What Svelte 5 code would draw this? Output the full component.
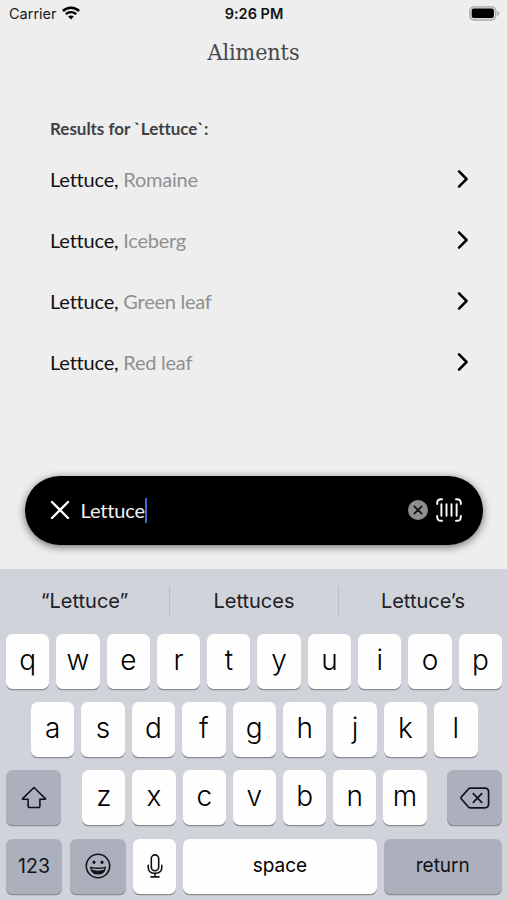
<script>
  const results = ['Romaine', 'Iceberg', 'Green leaf', 'Red leaf'];
  const suggestions = ['“Lettuce”', 'Lettuces', 'Lettuce’s'];
  const top = [...'qwertyuiop'];
  const home = [...'asdfghjkl'];
  const bottom = [...'zxcvbnm'];
</script>

<div class="phone">
  <header class="status">
    <div class="carrier">
      <span>Carrier</span>
      <svg width="18" height="14" viewBox="0 0 18 14" fill="none" stroke="#000">
        <path d="M.9 5C5.4.7 12.6.7 17.1 5" stroke-width="2.5" />
        <path d="M3.8 8.2c2.9-2.8 7.5-2.8 10.4 0" stroke-width="2.3" />
        <path d="M9 13.6 6.1 10.6c1.6-1.5 4.2-1.5 5.8 0z" fill="#000" stroke="none" />
      </svg>
    </div>
    <span class="time">9:26 PM</span>
    <svg class="battery" width="31" height="15" viewBox="0 0 31 15">
      <rect x=".8" y=".8" width="26" height="13.2" rx="4" fill="#dcdcdc" stroke="#aaa" stroke-width="1.3" />
      <rect x="2.7" y="2.6" width="22.2" height="9.5" rx="2" fill="#000" />
      <path d="M28.3 5v5q2-.8 2-2.5t-2-2.5z" fill="#aaa" />
    </svg>
  </header>

  <h1>Aliments</h1>

  <main>
    <h2>Results for `Lettuce`:</h2>
    {#each results as kind}
      <div class="result">
        <span>Lettuce, <em>{kind}</em></span>
        <svg width="12" height="20" viewBox="0 0 12 20" fill="none" stroke="#000" stroke-width="2.5" stroke-linecap="round" stroke-linejoin="round">
          <path d="m2 2.4 7.6 7.6L2 17.6" />
        </svg>
      </div>
    {/each}
  </main>

  <div class="search">
    <svg width="20" height="20" viewBox="0 0 20 20" stroke="#fff" stroke-width="2.4" stroke-linecap="round">
      <path d="m2 2 16 16M18 2 2 18" />
    </svg>
    <span class="query">Lettuce</span><i class="caret"></i>
    <svg class="clear" width="20" height="20" viewBox="0 0 20 20">
      <circle cx="10" cy="10" r="10" fill="#8e8d91" />
      <path d="m6.3 6.3 7.4 7.4M13.7 6.3l-7.4 7.4" stroke="#101012" stroke-width="1.7" stroke-linecap="round" />
    </svg>
    <svg width="26" height="24" viewBox="0 0 26 24" fill="none" stroke="#fff" stroke-width="1.9" stroke-linecap="round">
      <path d="M1.2 6V5Q1.2 1.2 5 1.2h1M20 1.2h1q3.8 0 3.8 3.8v1M24.8 18v1q0 3.8-3.8 3.8h-1M6 22.8H5Q1.2 22.8 1.2 19v-1" />
      <path d="M5.4 6.2v11.6M10.5 6.2v11.6M15.5 6.2v11.6M20.6 6.2v11.6" />
    </svg>
  </div>

  <section class="keyboard">
    <div class="suggestions">
      {#each suggestions as word}<span>{word}</span>{/each}
    </div>
    <div class="row">
      {#each top as letter}<div class="key">{letter}</div>{/each}
    </div>
    <div class="row home">
      {#each home as letter}<div class="key">{letter}</div>{/each}
    </div>
    <div class="row bottom">
      <div class="key dark shift">
        <svg width="26" height="24" viewBox="0 0 26 24" fill="none" stroke="#10131a" stroke-width="1.6" stroke-linejoin="round">
          <path d="M13 1.5 1.6 12.6q-.5.7.5.7h5v6.4q0 1.8 1.8 1.8h8.2q1.8 0 1.8-1.8v-6.4h5q1 0 .5-.7z" />
        </svg>
      </div>
      {#each bottom as letter}<div class="key">{letter}</div>{/each}
      <div class="key dark delete">
        <svg width="30" height="22" viewBox="0 0 30 22" fill="none" stroke="#10131a" stroke-width="1.7" stroke-linecap="round" stroke-linejoin="round">
          <path d="M10.6 1.2h14.2q3.8 0 3.8 3.8v12q0 3.8-3.8 3.8H10.6q-1.3 0-2.3-1L1.6 12.3q-1.2-1.3 0-2.6l6.7-7.5q1-1 2.3-1z" />
          <path d="m13.3 6.7 8.4 8.6M21.7 6.7l-8.4 8.6" />
        </svg>
      </div>
    </div>
    <div class="row controls">
      <div class="key dark numbers">123</div>
      <div class="key dark emoji">
        <svg width="26" height="26" viewBox="0 0 26 26" fill="none" stroke="#10131a">
          <circle cx="13" cy="13" r="11.7" stroke-width="1.6" />
          <ellipse cx="9" cy="9.2" rx="1.5" ry="1.8" fill="#10131a" stroke="none" />
          <ellipse cx="17" cy="9.2" rx="1.5" ry="1.8" fill="#10131a" stroke="none" />
          <path d="M5.7 14.3q7.3 1.9 14.6 0-.8 6.5-7.3 6.5t-7.3-6.5z" stroke-width="1.3" />
          <path d="M6.5 16.6q6.5 2.2 13 0-1.3 4.2-6.5 4.2t-6.5-4.2z" fill="#10131a" stroke="none" />
        </svg>
      </div>
      <div class="key mic">
        <svg width="16" height="24" viewBox="0 0 16 24" fill="none" stroke="#111" stroke-width="1.6" stroke-linecap="round">
          <rect x="4.3" y=".9" width="7.4" height="15.8" rx="3.7" />
          <path d="M1.2 11.4v1.9q0 6 6.8 6t6.8-6v-1.9M8 19.3v3.6M4 22.9h8" />
        </svg>
      </div>
      <div class="key space">space</div>
      <div class="key dark return">return</div>
    </div>
  </section>
</div>

<style>
  :global(body) { margin: 0; background: #eee; }
  .phone {
    box-sizing: border-box;
    width: 507px;
    height: 900px;
    display: flex;
    flex-direction: column;
    overflow: hidden;
    background: #eee;
    color: #000;
    font-family: Inter, "Liberation Sans", sans-serif;
    font-variant-ligatures: none;
  }
  .status {
    height: 27px;
    display: grid;
    grid-template-columns: 1fr auto 1fr;
    align-items: center;
    padding: 0 8px 0 9px;
    font-size: 14.5px;
    color: #1a1a1a;
  }
  .carrier { display: flex; align-items: center; gap: 5.5px; }
  .carrier svg { margin-top: -2px; }
  .time { font-weight: 600; color: #111; }
  .battery { justify-self: end; margin: -1px -1px 0 0; }
  h1 {
    margin: 9px 0 0;
    height: 32px;
    text-align: center;
    font: 400 23px/32px "DejaVu Serif Condensed", "DejaVu Serif", serif;
    letter-spacing: -.05px;
    color: #45484c;
  }
  main { padding: 50px 38.5px 0 50px; font-family: Lato, sans-serif; }
  h2 { margin: 0; font-size: 17px; line-height: 22px; font-weight: 700; letter-spacing: -.03px; color: #3f4145; }
  .result {
    height: 61px;
    display: flex;
    align-items: center;
    justify-content: space-between;
    font-size: 20px;
    letter-spacing: -.2px;
    color: #111;
  }
  h2 + .result { margin-top: 8.5px; }
  .result svg { margin-top: -1px; }
  em { font-style: normal; letter-spacing: -.25px; color: #909090; }
  .search {
    box-sizing: border-box;
    margin: 83.5px 24px 0 25px;
    height: 69px;
    flex: none;
    display: flex;
    align-items: center;
    padding: 0 21.5px 1px 24.5px;
    border-radius: 35px;
    background: #000;
    box-shadow: 0 2px 8px rgba(0, 0, 0, .55);
    font: 20px Lato, sans-serif;
    font-variant-ligatures: none;
    letter-spacing: -.15px;
    color: #f2f2f2;
  }
  .query { margin-left: 11px; }
  .caret { width: 2.5px; height: 25px; background: #4568d8; }
  .clear { margin: 0 7.5px 0 auto; }
  .keyboard { margin-top: auto; height: 331px; flex: none; background: #d0d3da; }
  .suggestions {
    height: 64.5px;
    display: grid;
    grid-template-columns: repeat(3, 1fr);
    align-items: center;
    font-size: 20px;
    color: #1d2025;
  }
  .suggestions span { height: 31px; line-height: 31px; text-align: center; }
  .suggestions span + span { border-left: 1px solid #b9bcc4; }
  .row { display: flex; gap: 7px; padding: 0 5px 0 6px; margin-bottom: 13.4px; }
  .key {
    box-sizing: border-box;
    flex: 1 1 0;
    height: 55px;
    display: flex;
    align-items: center;
    justify-content: center;
    border-radius: 6.5px;
    background: #fefefe;
    box-shadow: 0 1.3px 0 #8b8d92;
    font-size: 28px;
    font-weight: 300;
    padding-bottom: 3px;
    color: #000;
  }
  .home { padding: 0 29.5px 0 31px; }
  .dark { background: #abb0bc; color: #10131a; }
  .shift, .delete { flex: 0 0 55px; padding-bottom: 0; }
  .shift { margin-right: 14.3px; }
  .delete { margin-left: 13.5px; }
  .controls .key { flex: 0 0 43.3px; font-size: 19px; font-weight: 400; }
  .controls .numbers, .controls .emoji { flex-basis: 56px; padding-bottom: 0; }
  .controls .numbers { margin-right: 1px; font-size: 19.5px; }
  .controls .mic { padding: 0 0 0 1px; }
  .controls .space, .controls .return { padding-bottom: 2px; }
  .controls .space { flex: 1; }
  .controls .return { flex-basis: 118.5px; }
</style>
